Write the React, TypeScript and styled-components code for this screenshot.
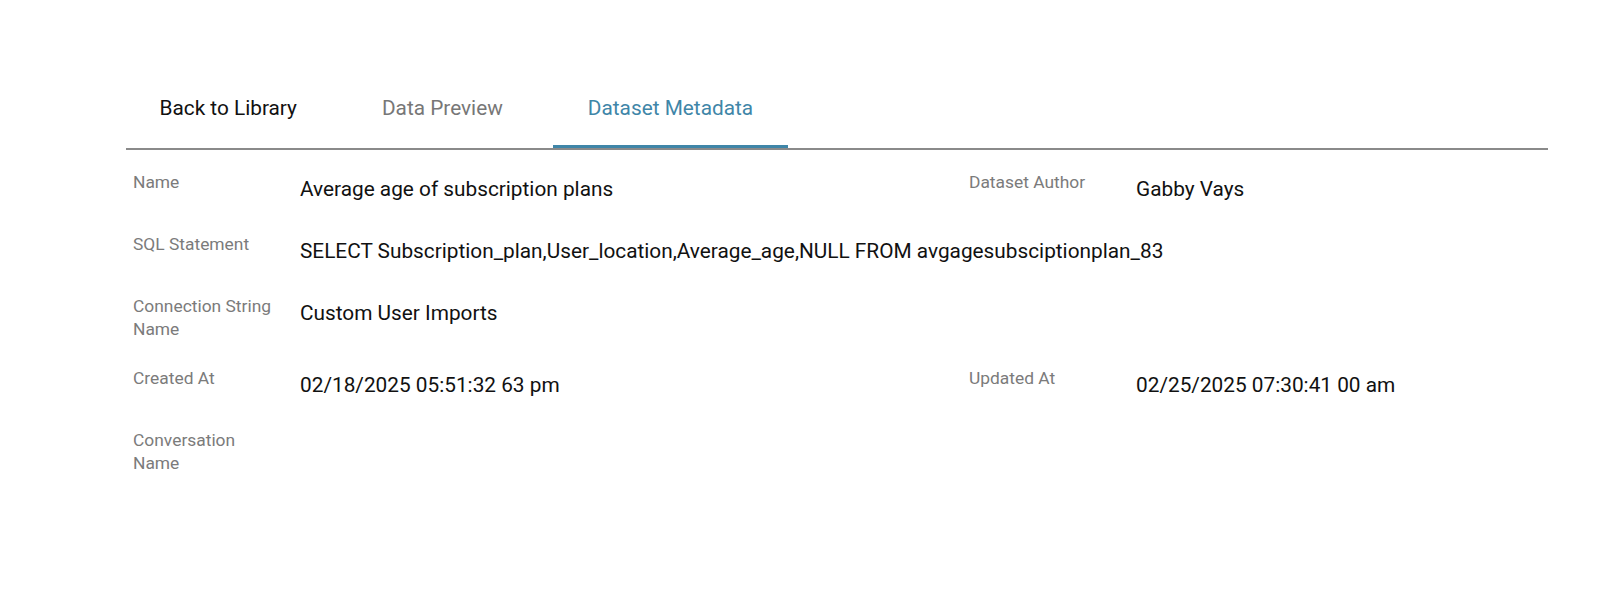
import styled, { createGlobalStyle } from "styled-components";

const colors = {
  TEXT: "#111111",
  MUTED: "#7b7b7b",
  TAB_MUTED: "#777777",
  ACCENT: "#3f86a8",
  DIVIDER: "#8a8a8a",
};

type fieldType = {
  label: string;
  value: string;
};

type rowType = {
  fields: fieldType[];
  wide?: boolean;
};

const tabs = ["Back to Library", "Data Preview", "Dataset Metadata"];
const activeTab = "Dataset Metadata";

const rows: rowType[] = [
  {
    fields: [
      { label: "Name", value: "Average age of subscription plans" },
      { label: "Dataset Author", value: "Gabby Vays" },
    ],
  },
  {
    wide: true,
    fields: [
      {
        label: "SQL Statement",
        value:
          "SELECT Subscription_plan,User_location,Average_age,NULL FROM avgagesubsciptionplan_83",
      },
    ],
  },
  { fields: [{ label: "Connection String Name", value: "Custom User Imports" }] },
  {
    fields: [
      { label: "Created At", value: "02/18/2025 05:51:32 63 pm" },
      { label: "Updated At", value: "02/25/2025 07:30:41 00 am" },
    ],
  },
  { fields: [{ label: "Conversation Name", value: "" }] },
];

const App = () => {
  return (
    <>
      <GlobalStyle />
      <Page>
        <TabBar>
          {tabs.map((tab, i) => (
            <Tab key={tab} $active={tab === activeTab} $first={i === 0}>
              {tab}
            </Tab>
          ))}
        </TabBar>
        <MetaList>
          {rows.map((row) => (
            <Row key={row.fields[0].label}>
              {row.fields.map((field) => (
                <Field key={field.label} $wide={row.wide ?? false}>
                  <Label>{field.label}</Label>
                  <Value>{field.value}</Value>
                </Field>
              ))}
            </Row>
          ))}
        </MetaList>
      </Page>
    </>
  );
};

export default App;

const GlobalStyle = createGlobalStyle`
  html, body {
    margin: 0;
    padding: 0;
    background: #ffffff;
  }
  body {
    font-family: Roboto, "Liberation Sans", sans-serif;
    color: ${colors.TEXT};
  }
`;

const Page = styled.div`
  width: 1422px;
  margin-left: 126px;
  padding-top: 69px;
`;

const TabBar = styled.div`
  display: flex;
  flex-direction: row;
  align-items: stretch;
  column-gap: 16px;
  border-bottom: solid 2px ${colors.DIVIDER};
`;

const Tab = styled.div<{ $active: boolean; $first: boolean }>`
  position: relative;
  padding: 27px 34.5px 28px;
  margin-left: ${(props) => (props.$first ? "-1px" : "0")};
  font-size: 20.8px;
  line-height: 24px;
  white-space: nowrap;
  color: ${(props) =>
    props.$active ? colors.ACCENT : props.$first ? colors.TEXT : colors.TAB_MUTED};
  cursor: pointer;

  &::after {
    content: "";
    display: ${(props) => (props.$active ? "block" : "none")};
    position: absolute;
    left: 0;
    right: 0;
    bottom: 0;
    height: 3px;
    background-color: ${colors.ACCENT};
  }
`;

const MetaList = styled.div`
  display: flex;
  flex-direction: column;
  row-gap: 26px;
  padding: 21px 0 0 7px;
`;

const Row = styled.div`
  display: grid;
  grid-template-columns: 836px 1fr;
  align-items: start;
`;

const Field = styled.div<{ $wide: boolean }>`
  display: grid;
  grid-template-columns: 167px 1fr;
  grid-column: ${(props) => (props.$wide ? "1 / -1" : "auto")};
  align-items: start;
`;

const Label = styled.div`
  font-size: 17.4px;
  line-height: 23px;
  color: ${colors.MUTED};
  max-width: 145px;
`;

const Value = styled.div`
  font-size: 20.8px;
  line-height: 36px;
  color: ${colors.TEXT};
  white-space: nowrap;
`;
